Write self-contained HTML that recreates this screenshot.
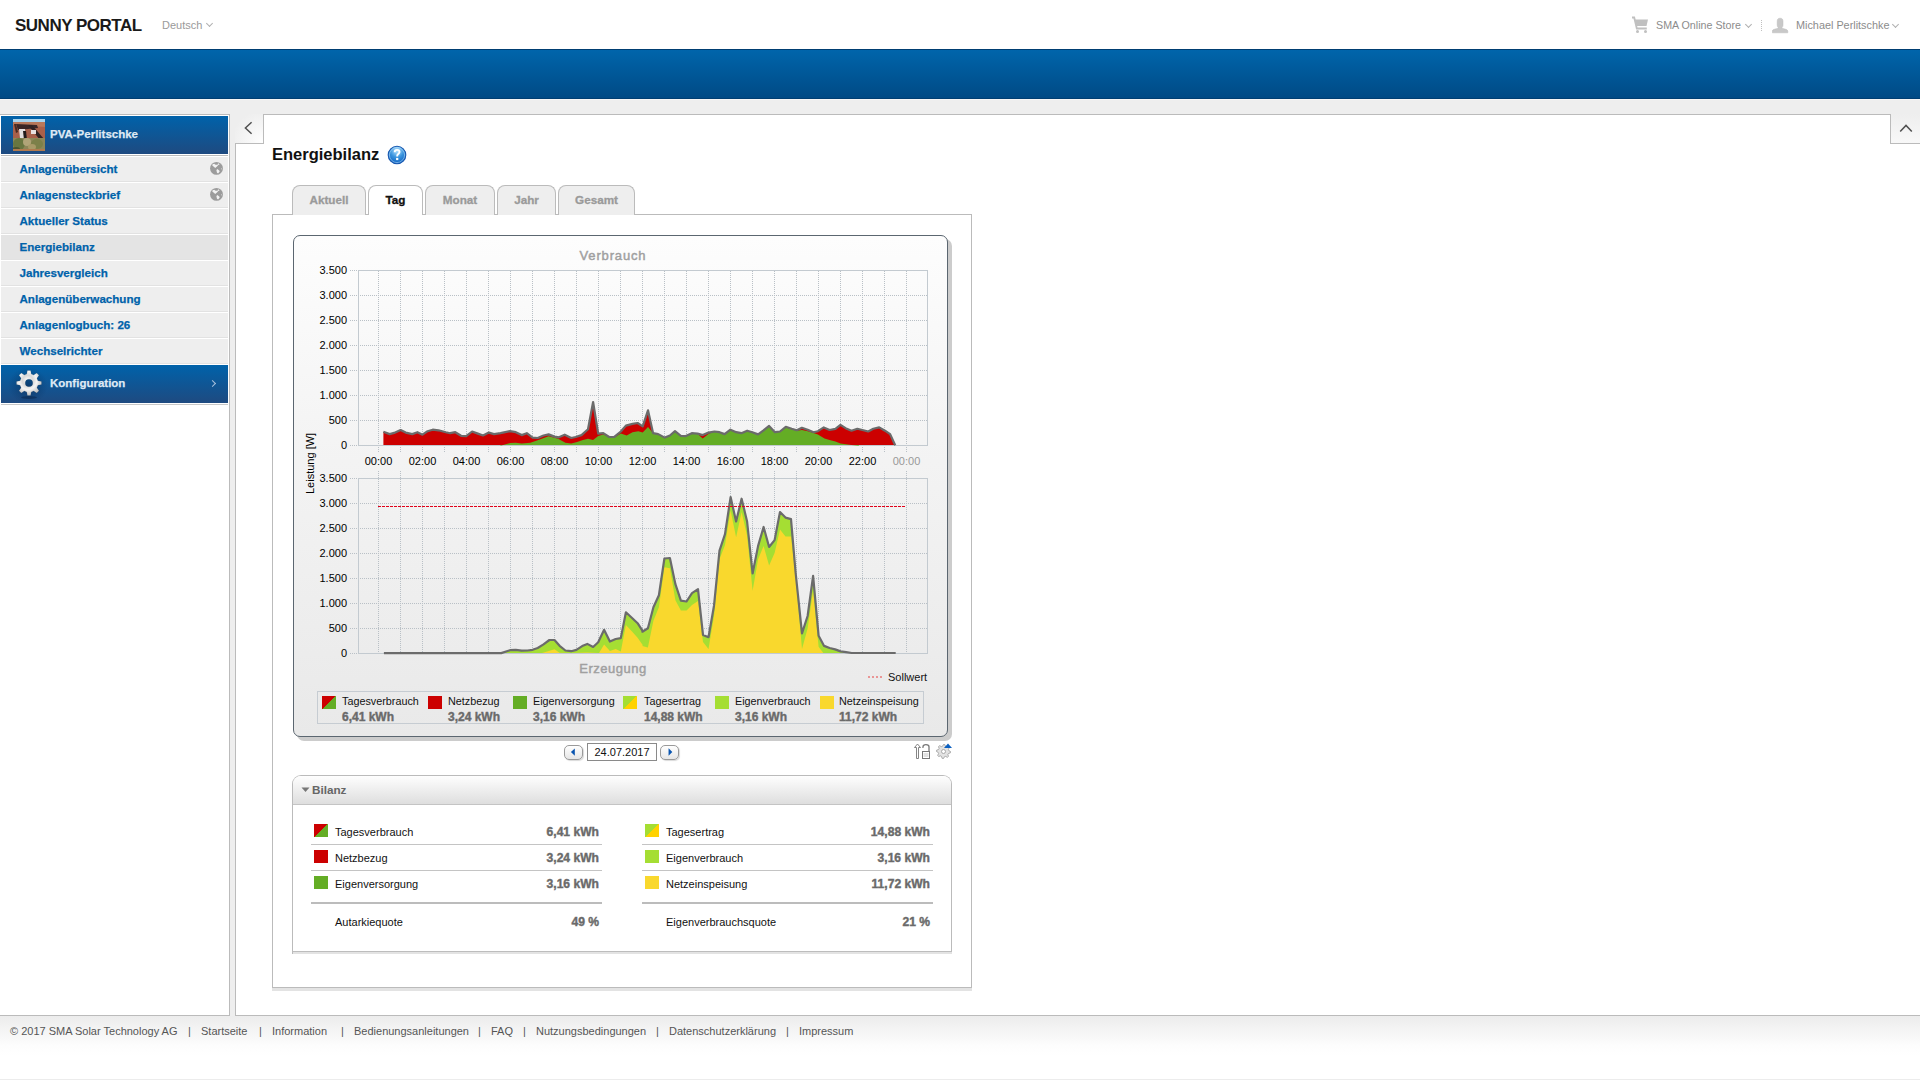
<!DOCTYPE html><html><head><meta charset="utf-8"><style>
*{box-sizing:border-box}
html,body{margin:0;padding:0}
body{width:1920px;height:1080px;overflow:hidden;position:relative;background:#eeeeee;font-family:"Liberation Sans",sans-serif;font-size:11px;color:#000}
div,span,svg{position:absolute}
.nw{white-space:nowrap}
.chev{width:5px;height:5px;border-right:1px solid #b0b0b0;border-bottom:1px solid #b0b0b0;transform:rotate(45deg)}
.mi{left:1px;width:227px;height:24px;background:#eeeeee}
.mt{left:19.5px;color:#0062aa;font-weight:700;font-size:11.6px;line-height:14px;white-space:nowrap;-webkit-text-stroke:0.25px #0062aa}
.tab{top:185px;height:30px;background:#eeeeee;border:1px solid #bbbbbb;border-bottom:none;border-radius:8px 8px 0 0}
.tt{top:7px;left:0;right:0;text-align:center;font-weight:700;font-size:11.7px;line-height:14px;color:#9a9a9a;-webkit-text-stroke:0.3px #9a9a9a}
.yl{width:40px;text-align:right;font-size:11px;line-height:14px;color:#000}
.xl{width:40px;text-align:center;font-size:11px;line-height:14px;color:#000}
.sw{width:14px;height:13px}
.lt{font-size:10.8px;line-height:14px;color:#111;white-space:nowrap}
.lv{font-size:12px;line-height:14px;color:#6a6a6a;font-weight:700;white-space:nowrap;-webkit-text-stroke:0.4px #6a6a6a}
.bt{font-size:11px;line-height:14px;color:#111;white-space:nowrap}
.bv{font-size:12.1px;line-height:14px;color:#6a6a6a;font-weight:700;white-space:nowrap;text-align:right;-webkit-text-stroke:0.4px #6a6a6a}
.hr{height:1px;background:#c4c4c4}
.ft{top:1024px;font-size:11px;line-height:14px;color:#555;white-space:nowrap}
</style></head><body>
<div style="left:0;top:0;width:1920px;height:49px;background:#fff"></div>
<div class="nw" style="left:15px;top:16px;font-size:17px;letter-spacing:-0.5px;font-weight:700;color:#1a1a1a;line-height:20px">SUNNY PORTAL</div>
<div class="nw" style="left:162px;top:18px;font-size:11px;color:#9a9a9a;line-height:14px">Deutsch</div>
<div class="chev" style="left:207px;top:21px"></div>
<svg style="left:1631px;top:16px" width="18" height="18" viewBox="0 0 18 18">
<path d="M1,1.5 H3.2 L5.8,12.5 H15.8" fill="none" stroke="#c0c0c0" stroke-width="1.8"/>
<path d="M4,3.5 H17 L15.5,10 H5.3 Z" fill="#c0c0c0"/>
<circle cx="6.5" cy="15.6" r="1.5" fill="#c0c0c0"/><circle cx="14.5" cy="15.6" r="1.5" fill="#c0c0c0"/></svg>
<div class="nw" style="left:1656px;top:18px;color:#8c8c8c;font-size:10.7px;line-height:14px">SMA Online Store</div>
<div class="chev" style="left:1746px;top:22px"></div>
<div style="left:1761px;top:20px;width:1px;height:11px;border-left:1px dotted #c0c0c0"></div>
<svg style="left:1772px;top:17px" width="17" height="17" viewBox="0 0 17 17">
<path d="M8.1,1.2 C10.2,1.2 11,2.3 11,4.5 V8 C11,9.2 10.6,10 10,10.6 V11.3 C12.5,11.9 15.8,12.5 15.8,14 V15.8 H0.3 V14 C0.3,12.5 3.6,11.9 6.2,11.3 V10.6 C5.6,10 5.2,9.2 5.2,8 V4.5 C5.2,2.3 6,1.2 8.1,1.2Z" fill="#c8c8c8" stroke="#bdbdbd" stroke-width="0.5"/></svg>
<div class="nw" style="left:1796px;top:18px;color:#8c8c8c;font-size:10.85px;line-height:14px">Michael Perlitschke</div>
<div class="chev" style="left:1893px;top:22px"></div>
<div style="left:0;top:49px;width:1920px;height:50px;background:linear-gradient(#0065ab,#004a85);border-top:1px solid #003e72;border-bottom:1px solid #003e72"></div>
<div style="left:0;top:99px;width:1920px;height:1px;background:#f6f6f6"></div>
<div style="left:0;top:114px;width:230px;height:902px;background:#fff;border-top:1px solid #bbb;border-right:1px solid #bbb"></div>
<div style="left:1px;top:116px;width:227px;height:38px;background:linear-gradient(#0062aa,#1e4a80)"></div>
<svg style="left:13px;top:119px" width="32" height="32" viewBox="0 0 32 32"><defs><filter id="bl" x="-10%" y="-10%" width="120%" height="120%"><feGaussianBlur stdDeviation="0.45"/></filter><clipPath id="pc"><rect width="32" height="32"/></clipPath></defs>
<g clip-path="url(#pc)"><rect width="32" height="32" fill="#a8604a"/>
<g filter="url(#bl)">
<rect x="-2" y="-2" width="36" height="5" fill="#a8d4ee"/>
<polygon points="-2,3 34,3 34,8 -2,6" fill="#b8785a"/>
<polygon points="3,5 24,6 25,9 5,11" fill="#3a2828"/>
<polygon points="15,6 19,6 31,20 27,21" fill="#302424"/>
<polygon points="6,10 12,10 13,19 7,19" fill="#e4e0e0"/>
<polygon points="10,12 13,12 14,21 11,21" fill="#241a1a"/>
<rect x="18" y="11" width="5" height="4" fill="#e8e0e0"/>
<polygon points="1,5 3,5 5,13 3,14" fill="#4a2a22"/>
<rect x="-2" y="19" width="36" height="15" fill="#8c8658"/>
<ellipse cx="6" cy="25" rx="6" ry="6" fill="#687640"/><ellipse cx="14" cy="23" rx="4" ry="4" fill="#b0a478"/><ellipse cx="24" cy="25" rx="6" ry="5" fill="#7c8048"/><ellipse cx="19" cy="28" rx="4" ry="3" fill="#a89a68"/><ellipse cx="3" cy="30" rx="4" ry="2" fill="#4a5430"/>
<rect x="-2" y="30" width="36" height="4" fill="#b07a50"/>
</g></g></svg>
<div class="nw" style="left:50px;top:127px;color:#dfe9f4;font-weight:700;font-size:11.5px;line-height:14px;-webkit-text-stroke:0.25px #dfe9f4">PVA-Perlitschke</div>
<div style="left:1px;top:155px;width:227px;height:1px;background:#bbb"></div>
<div class="mi" style="top:157px;background:#eeeeee"></div>
<div style="left:1px;top:181px;width:227px;height:1px;background:#e2e2e2"></div>
<div class="mt" style="top:162px">Anlagenübersicht</div>
<svg style="left:210px;top:162px" width="14" height="14" viewBox="0 0 14 14"><circle cx="6.5" cy="6.4" r="6.4" fill="#9c9c9c"/>
<path d="M2.6,2.2 L4.2,1.8 L5.6,2.7 L7.6,2.7 L8.1,1.3 L9.7,2.3 L8.3,3.1 L7.2,4.2 L5.2,6 L3.8,4.8 L2.3,3.5Z M7.2,7 L9.3,8.6 L9.7,9.5 L8.1,11.5 L7,10.7 L6.4,8.2Z M11.2,6.2 L11.9,6.8 L11.4,7.6 L10.9,7Z" fill="#f2f2f2"/></svg>
<div class="mi" style="top:183px;background:#eeeeee"></div>
<div style="left:1px;top:207px;width:227px;height:1px;background:#e2e2e2"></div>
<div class="mt" style="top:188px">Anlagensteckbrief</div>
<svg style="left:210px;top:188px" width="14" height="14" viewBox="0 0 14 14"><circle cx="6.5" cy="6.4" r="6.4" fill="#9c9c9c"/>
<path d="M2.6,2.2 L4.2,1.8 L5.6,2.7 L7.6,2.7 L8.1,1.3 L9.7,2.3 L8.3,3.1 L7.2,4.2 L5.2,6 L3.8,4.8 L2.3,3.5Z M7.2,7 L9.3,8.6 L9.7,9.5 L8.1,11.5 L7,10.7 L6.4,8.2Z M11.2,6.2 L11.9,6.8 L11.4,7.6 L10.9,7Z" fill="#f2f2f2"/></svg>
<div class="mi" style="top:209px;background:#eeeeee"></div>
<div style="left:1px;top:233px;width:227px;height:1px;background:#e2e2e2"></div>
<div class="mt" style="top:214px">Aktueller Status</div>
<div class="mi" style="top:235px;background:#e4e4e4"></div>
<div style="left:1px;top:259px;width:227px;height:1px;background:#e2e2e2"></div>
<div class="mt" style="top:240px">Energiebilanz</div>
<div class="mi" style="top:261px;background:#eeeeee"></div>
<div style="left:1px;top:285px;width:227px;height:1px;background:#e2e2e2"></div>
<div class="mt" style="top:266px">Jahresvergleich</div>
<div class="mi" style="top:287px;background:#eeeeee"></div>
<div style="left:1px;top:311px;width:227px;height:1px;background:#e2e2e2"></div>
<div class="mt" style="top:292px">Anlagenüberwachung</div>
<div class="mi" style="top:313px;background:#eeeeee"></div>
<div style="left:1px;top:337px;width:227px;height:1px;background:#e2e2e2"></div>
<div class="mt" style="top:318px">Anlagenlogbuch: 26</div>
<div class="mi" style="top:339px;background:#eeeeee"></div>
<div style="left:1px;top:363px;width:227px;height:1px;background:#e2e2e2"></div>
<div class="mt" style="top:344px">Wechselrichter</div>
<div style="left:1px;top:365px;width:227px;height:38px;background:linear-gradient(#0062aa,#1e4a80)"></div>
<div style="left:8px;top:367px;width:40px;height:34px;background:radial-gradient(ellipse at 50% 55%,rgba(0,30,70,0.45),rgba(0,30,70,0) 70%)"></div>
<svg style="left:15px;top:369px" width="28" height="32" viewBox="0 0 28 32"><defs><radialGradient id="gg" cx="45%" cy="40%" r="60%"><stop offset="0" stop-color="#ffffff"/><stop offset="0.35" stop-color="#d8d8d8"/><stop offset="0.6" stop-color="#f4f4f4"/><stop offset="1" stop-color="#bdbdbd"/></radialGradient></defs>
<ellipse cx="14" cy="28.5" rx="8" ry="1.5" fill="rgba(0,20,50,0.35)"/>
<path d="M11.72,5.09 L12.40,1.50 L15.60,1.50 L16.28,5.09 L18.69,6.09 L21.71,4.03 L23.97,6.29 L21.91,9.31 L22.91,11.72 L26.50,12.40 L26.50,15.60 L22.91,16.28 L21.91,18.69 L23.97,21.71 L21.71,23.97 L18.69,21.91 L16.28,22.91 L15.60,26.50 L12.40,26.50 L11.72,22.91 L9.31,21.91 L6.29,23.97 L4.03,21.71 L6.09,18.69 L5.09,16.28 L1.50,15.60 L1.50,12.40 L5.09,11.72 L6.09,9.31 L4.03,6.29 L6.29,4.03 L9.31,6.09Z M14,10.2 A3.8,3.8 0 1,0 14,17.8 A3.8,3.8 0 1,0 14,10.2Z" fill="url(#gg)" fill-rule="evenodd" stroke="rgba(60,60,60,0.35)" stroke-width="0.4" stroke-linejoin="round"/></svg>
<div class="nw" style="left:50px;top:376px;color:#dfe9f4;font-weight:700;font-size:11.5px;line-height:14px;-webkit-text-stroke:0.25px #dfe9f4">Konfiguration</div>
<div style="left:210px;top:381px;width:5px;height:5px;border-right:1.3px solid #a8c0dc;border-top:1.3px solid #a8c0dc;transform:rotate(45deg)"></div>
<div style="left:1px;top:404px;width:227px;height:1px;background:#c8c8c8"></div>
<div style="left:235px;top:114px;width:1685px;height:902px;background:#fff"></div>
<div style="left:263px;top:114px;width:1628px;height:1px;background:#bbb"></div>
<div style="left:235px;top:143px;width:1px;height:873px;background:#bbb"></div>
<div style="left:235px;top:114px;width:29px;height:30px;background:radial-gradient(circle at 100% 100%,#ffffff 0,#f6f6f6 40%,#eeeeee 80%);border-right:1px solid #bbb;border-bottom:1px solid #bbb"></div>
<svg style="left:243px;top:121px" width="10" height="14" viewBox="0 0 10 14"><path d="M8.6,1.2 L2.4,7 L8.6,12.8" fill="none" stroke="#505050" stroke-width="1.5"/></svg>
<div style="left:1890px;top:114px;width:30px;height:30px;background:linear-gradient(#eeeeee,#f8f8f8);border-left:1px solid #bbb;border-bottom:1px solid #bbb"></div>
<svg style="left:1899px;top:123px" width="14" height="10" viewBox="0 0 14 10"><path d="M1.2,8.6 L7,2.4 L12.8,8.6" fill="none" stroke="#505050" stroke-width="1.5"/></svg>
<div class="nw" style="left:272px;top:144px;font-size:16.5px;font-weight:700;color:#111;line-height:20px">Energiebilanz</div>
<svg style="left:386px;top:144px" width="22" height="22" viewBox="0 0 22 22"><defs><radialGradient id="hg" cx="50%" cy="25%" r="75%"><stop offset="0" stop-color="#b8e4ff"/><stop offset="0.5" stop-color="#3a94de"/><stop offset="1" stop-color="#0b5fc0"/></radialGradient></defs>
<circle cx="11" cy="11" r="8.8" fill="url(#hg)" stroke="#1858b0" stroke-width="1.1"/>
<circle cx="11" cy="11" r="7.6" fill="none" stroke="rgba(200,235,255,0.55)" stroke-width="0.9"/>
<path d="M8.7,8.2 C8.7,6.6 9.8,5.9 11.1,5.9 C12.5,5.9 13.5,6.8 13.5,8 C13.5,9.4 12.2,9.8 11.6,10.6 C11.3,11 11.2,11.6 11.2,12.4" fill="none" stroke="#fff" stroke-width="1.9"/>
<rect x="10.1" y="13.9" width="2.2" height="2.2" fill="#fff"/></svg>
<div style="left:272px;top:214px;width:700px;height:774px;background:#fff;border:1px solid #bbb"></div>
<div style="left:272px;top:988px;width:700px;height:3px;background:#e3e3e3"></div>
<div class="tab" style="left:292px;width:74px"><div class="tt">Aktuell</div></div>
<div class="tab" style="left:368px;width:55px;background:#fff;height:30px"><div class="tt" style="color:#111;-webkit-text-stroke:0.3px #111">Tag</div></div>
<div class="tab" style="left:425px;width:70px"><div class="tt">Monat</div></div>
<div class="tab" style="left:497px;width:59px"><div class="tt">Jahr</div></div>
<div class="tab" style="left:558px;width:77px"><div class="tt">Gesamt</div></div>
<div style="left:297px;top:239px;width:655px;height:502px;background:#cccccc;border-radius:7px"></div>
<div style="left:293px;top:235px;width:655px;height:502px;background:linear-gradient(#fdfdfd 0,#f3f3f3 45%,#e9e9e9 100%);border:1px solid #5b6670;border-radius:7px"></div>
<svg style="left:0;top:0" width="1920" height="1080" viewBox="0 0 1920 1080">
<line x1="378.5" y1="271" x2="378.5" y2="453" stroke="#b9c0c6" stroke-width="1" stroke-dasharray="1,1"/>
<line x1="400.5" y1="271" x2="400.5" y2="453" stroke="#b9c0c6" stroke-width="1" stroke-dasharray="1,1"/>
<line x1="422.5" y1="271" x2="422.5" y2="453" stroke="#b9c0c6" stroke-width="1" stroke-dasharray="1,1"/>
<line x1="444.5" y1="271" x2="444.5" y2="453" stroke="#b9c0c6" stroke-width="1" stroke-dasharray="1,1"/>
<line x1="466.5" y1="271" x2="466.5" y2="453" stroke="#b9c0c6" stroke-width="1" stroke-dasharray="1,1"/>
<line x1="488.5" y1="271" x2="488.5" y2="453" stroke="#b9c0c6" stroke-width="1" stroke-dasharray="1,1"/>
<line x1="510.5" y1="271" x2="510.5" y2="453" stroke="#b9c0c6" stroke-width="1" stroke-dasharray="1,1"/>
<line x1="532.5" y1="271" x2="532.5" y2="453" stroke="#b9c0c6" stroke-width="1" stroke-dasharray="1,1"/>
<line x1="554.5" y1="271" x2="554.5" y2="453" stroke="#b9c0c6" stroke-width="1" stroke-dasharray="1,1"/>
<line x1="576.5" y1="271" x2="576.5" y2="453" stroke="#b9c0c6" stroke-width="1" stroke-dasharray="1,1"/>
<line x1="598.5" y1="271" x2="598.5" y2="453" stroke="#b9c0c6" stroke-width="1" stroke-dasharray="1,1"/>
<line x1="620.5" y1="271" x2="620.5" y2="453" stroke="#b9c0c6" stroke-width="1" stroke-dasharray="1,1"/>
<line x1="642.5" y1="271" x2="642.5" y2="453" stroke="#b9c0c6" stroke-width="1" stroke-dasharray="1,1"/>
<line x1="664.5" y1="271" x2="664.5" y2="453" stroke="#b9c0c6" stroke-width="1" stroke-dasharray="1,1"/>
<line x1="686.5" y1="271" x2="686.5" y2="453" stroke="#b9c0c6" stroke-width="1" stroke-dasharray="1,1"/>
<line x1="708.5" y1="271" x2="708.5" y2="453" stroke="#b9c0c6" stroke-width="1" stroke-dasharray="1,1"/>
<line x1="730.5" y1="271" x2="730.5" y2="453" stroke="#b9c0c6" stroke-width="1" stroke-dasharray="1,1"/>
<line x1="752.5" y1="271" x2="752.5" y2="453" stroke="#b9c0c6" stroke-width="1" stroke-dasharray="1,1"/>
<line x1="774.5" y1="271" x2="774.5" y2="453" stroke="#b9c0c6" stroke-width="1" stroke-dasharray="1,1"/>
<line x1="796.5" y1="271" x2="796.5" y2="453" stroke="#b9c0c6" stroke-width="1" stroke-dasharray="1,1"/>
<line x1="818.5" y1="271" x2="818.5" y2="453" stroke="#b9c0c6" stroke-width="1" stroke-dasharray="1,1"/>
<line x1="840.5" y1="271" x2="840.5" y2="453" stroke="#b9c0c6" stroke-width="1" stroke-dasharray="1,1"/>
<line x1="862.5" y1="271" x2="862.5" y2="453" stroke="#b9c0c6" stroke-width="1" stroke-dasharray="1,1"/>
<line x1="884.5" y1="271" x2="884.5" y2="453" stroke="#b9c0c6" stroke-width="1" stroke-dasharray="1,1"/>
<line x1="906.5" y1="271" x2="906.5" y2="453" stroke="#b9c0c6" stroke-width="1" stroke-dasharray="1,1"/>
<line x1="350" y1="270.5" x2="927" y2="270.5" stroke="#b9c0c6" stroke-width="1" stroke-dasharray="1,1"/>
<line x1="350" y1="295.5" x2="927" y2="295.5" stroke="#b9c0c6" stroke-width="1" stroke-dasharray="1,1"/>
<line x1="350" y1="320.5" x2="927" y2="320.5" stroke="#b9c0c6" stroke-width="1" stroke-dasharray="1,1"/>
<line x1="350" y1="345.5" x2="927" y2="345.5" stroke="#b9c0c6" stroke-width="1" stroke-dasharray="1,1"/>
<line x1="350" y1="370.5" x2="927" y2="370.5" stroke="#b9c0c6" stroke-width="1" stroke-dasharray="1,1"/>
<line x1="350" y1="395.5" x2="927" y2="395.5" stroke="#b9c0c6" stroke-width="1" stroke-dasharray="1,1"/>
<line x1="350" y1="420.5" x2="927" y2="420.5" stroke="#b9c0c6" stroke-width="1" stroke-dasharray="1,1"/>
<line x1="350" y1="445.5" x2="927" y2="445.5" stroke="#b9c0c6" stroke-width="1" stroke-dasharray="1,1"/>
<rect x="358.5" y="270.5" width="569" height="175" fill="none" stroke="#c3cad0" stroke-width="1"/>
<line x1="378.5" y1="471" x2="378.5" y2="653" stroke="#b9c0c6" stroke-width="1" stroke-dasharray="1,1"/>
<line x1="400.5" y1="471" x2="400.5" y2="653" stroke="#b9c0c6" stroke-width="1" stroke-dasharray="1,1"/>
<line x1="422.5" y1="471" x2="422.5" y2="653" stroke="#b9c0c6" stroke-width="1" stroke-dasharray="1,1"/>
<line x1="444.5" y1="471" x2="444.5" y2="653" stroke="#b9c0c6" stroke-width="1" stroke-dasharray="1,1"/>
<line x1="466.5" y1="471" x2="466.5" y2="653" stroke="#b9c0c6" stroke-width="1" stroke-dasharray="1,1"/>
<line x1="488.5" y1="471" x2="488.5" y2="653" stroke="#b9c0c6" stroke-width="1" stroke-dasharray="1,1"/>
<line x1="510.5" y1="471" x2="510.5" y2="653" stroke="#b9c0c6" stroke-width="1" stroke-dasharray="1,1"/>
<line x1="532.5" y1="471" x2="532.5" y2="653" stroke="#b9c0c6" stroke-width="1" stroke-dasharray="1,1"/>
<line x1="554.5" y1="471" x2="554.5" y2="653" stroke="#b9c0c6" stroke-width="1" stroke-dasharray="1,1"/>
<line x1="576.5" y1="471" x2="576.5" y2="653" stroke="#b9c0c6" stroke-width="1" stroke-dasharray="1,1"/>
<line x1="598.5" y1="471" x2="598.5" y2="653" stroke="#b9c0c6" stroke-width="1" stroke-dasharray="1,1"/>
<line x1="620.5" y1="471" x2="620.5" y2="653" stroke="#b9c0c6" stroke-width="1" stroke-dasharray="1,1"/>
<line x1="642.5" y1="471" x2="642.5" y2="653" stroke="#b9c0c6" stroke-width="1" stroke-dasharray="1,1"/>
<line x1="664.5" y1="471" x2="664.5" y2="653" stroke="#b9c0c6" stroke-width="1" stroke-dasharray="1,1"/>
<line x1="686.5" y1="471" x2="686.5" y2="653" stroke="#b9c0c6" stroke-width="1" stroke-dasharray="1,1"/>
<line x1="708.5" y1="471" x2="708.5" y2="653" stroke="#b9c0c6" stroke-width="1" stroke-dasharray="1,1"/>
<line x1="730.5" y1="471" x2="730.5" y2="653" stroke="#b9c0c6" stroke-width="1" stroke-dasharray="1,1"/>
<line x1="752.5" y1="471" x2="752.5" y2="653" stroke="#b9c0c6" stroke-width="1" stroke-dasharray="1,1"/>
<line x1="774.5" y1="471" x2="774.5" y2="653" stroke="#b9c0c6" stroke-width="1" stroke-dasharray="1,1"/>
<line x1="796.5" y1="471" x2="796.5" y2="653" stroke="#b9c0c6" stroke-width="1" stroke-dasharray="1,1"/>
<line x1="818.5" y1="471" x2="818.5" y2="653" stroke="#b9c0c6" stroke-width="1" stroke-dasharray="1,1"/>
<line x1="840.5" y1="471" x2="840.5" y2="653" stroke="#b9c0c6" stroke-width="1" stroke-dasharray="1,1"/>
<line x1="862.5" y1="471" x2="862.5" y2="653" stroke="#b9c0c6" stroke-width="1" stroke-dasharray="1,1"/>
<line x1="884.5" y1="471" x2="884.5" y2="653" stroke="#b9c0c6" stroke-width="1" stroke-dasharray="1,1"/>
<line x1="906.5" y1="471" x2="906.5" y2="653" stroke="#b9c0c6" stroke-width="1" stroke-dasharray="1,1"/>
<line x1="350" y1="478.5" x2="927" y2="478.5" stroke="#b9c0c6" stroke-width="1" stroke-dasharray="1,1"/>
<line x1="350" y1="503.5" x2="927" y2="503.5" stroke="#b9c0c6" stroke-width="1" stroke-dasharray="1,1"/>
<line x1="350" y1="528.5" x2="927" y2="528.5" stroke="#b9c0c6" stroke-width="1" stroke-dasharray="1,1"/>
<line x1="350" y1="553.5" x2="927" y2="553.5" stroke="#b9c0c6" stroke-width="1" stroke-dasharray="1,1"/>
<line x1="350" y1="578.5" x2="927" y2="578.5" stroke="#b9c0c6" stroke-width="1" stroke-dasharray="1,1"/>
<line x1="350" y1="603.5" x2="927" y2="603.5" stroke="#b9c0c6" stroke-width="1" stroke-dasharray="1,1"/>
<line x1="350" y1="628.5" x2="927" y2="628.5" stroke="#b9c0c6" stroke-width="1" stroke-dasharray="1,1"/>
<line x1="350" y1="653.5" x2="927" y2="653.5" stroke="#b9c0c6" stroke-width="1" stroke-dasharray="1,1"/>
<rect x="358.5" y="478.5" width="569" height="175" fill="none" stroke="#c3cad0" stroke-width="1"/>
<path d="M383.4,445.0 L383.4,431.8 L389.7,434.1 L394.1,432.9 L400.6,430.0 L405.7,432.6 L412.3,434.1 L417.4,432.2 L422.5,434.7 L427.6,431.2 L432.7,429.7 L438.5,430.3 L445.8,432.2 L450.2,433.2 L455.3,432.2 L461.1,435.8 L466.2,436.1 L472.1,431.5 L477.9,433.6 L483.0,435.5 L488.9,432.6 L494.0,434.1 L500.5,433.2 L510.0,431.2 L515.8,432.2 L521.7,435.1 L526.8,433.2 L532.6,437.6 L537.7,438.0 L543.5,435.5 L548.6,434.4 L554.5,436.6 L558.9,437.3 L564.7,434.7 L571.2,438.0 L575.6,437.0 L581.5,435.1 L588.0,429.3 L593.1,402.0 L598.2,433.6 L603.3,433.2 L609.2,437.0 L614.3,436.9 L620.8,431.5 L625.9,425.6 L632.5,423.9 L637.6,423.0 L642.7,426.4 L648.0,410.3 L653.1,433.2 L658.2,434.1 L664.8,437.6 L669.9,435.5 L675.0,431.2 L680.8,435.8 L685.9,436.1 L691.8,433.2 L697.6,433.6 L702.7,435.1 L708.5,432.6 L714.4,431.5 L719.5,432.2 L724.6,434.1 L730.4,429.7 L736.2,432.2 L741.4,433.2 L747.2,430.7 L752.3,432.2 L758.1,434.4 L763.2,430.7 L769.1,425.9 L774.9,432.2 L780.0,431.5 L785.8,426.8 L791.7,428.8 L796.8,430.3 L801.9,427.8 L807.7,429.7 L813.5,432.2 L817.9,431.2 L823.8,427.4 L829.6,430.0 L835.4,428.8 L840.5,424.9 L845.6,428.2 L851.5,430.7 L857.3,428.8 L862.4,430.0 L868.2,431.5 L873.3,428.8 L879.2,427.4 L885.0,430.7 L890.1,434.1 L895.2,445.3 L895.2,445.0Z" fill="#cc0000"/>
<path d="M500.5,445.0 L500.5,445.8 L510.0,443.1 L515.8,442.8 L521.7,443.6 L530.4,442.8 L537.7,440.2 L548.6,436.3 L558.1,438.8 L565.4,442.8 L571.2,443.6 L577.1,442.0 L582.9,439.9 L588.0,438.8 L593.1,439.9 L598.2,436.1 L603.3,434.4 L609.2,437.3 L615.0,437.3 L620.8,433.6 L626.7,435.5 L632.5,432.2 L638.3,431.2 L642.7,432.6 L648.0,427.1 L653.1,433.2 L658.2,434.1 L664.8,437.6 L669.9,435.5 L675.0,431.2 L680.8,435.8 L685.9,436.1 L691.8,433.2 L697.6,434.1 L702.7,438.5 L708.5,434.1 L714.4,431.5 L719.5,432.2 L724.6,434.1 L730.4,429.7 L736.2,432.2 L741.4,433.2 L747.2,430.7 L752.3,432.2 L758.1,434.4 L763.2,430.7 L769.1,425.9 L774.9,432.2 L780.0,431.5 L785.8,427.4 L791.7,429.3 L796.8,430.7 L801.9,430.0 L807.7,431.2 L813.5,432.9 L817.9,434.4 L824.5,438.5 L829.6,439.9 L835.4,441.4 L840.5,443.4 L851.5,444.9 L858.8,445.8 L858.8,445.0Z" fill="#64ad25"/>
<path d="M383.4,431.8 L389.7,434.1 L394.1,432.9 L400.6,430.0 L405.7,432.6 L412.3,434.1 L417.4,432.2 L422.5,434.7 L427.6,431.2 L432.7,429.7 L438.5,430.3 L445.8,432.2 L450.2,433.2 L455.3,432.2 L461.1,435.8 L466.2,436.1 L472.1,431.5 L477.9,433.6 L483.0,435.5 L488.9,432.6 L494.0,434.1 L500.5,433.2 L510.0,431.2 L515.8,432.2 L521.7,435.1 L526.8,433.2 L532.6,437.6 L537.7,438.0 L543.5,435.5 L548.6,434.4 L554.5,436.6 L558.9,437.3 L564.7,434.7 L571.2,438.0 L575.6,437.0 L581.5,435.1 L588.0,429.3 L593.1,402.0 L598.2,433.6 L603.3,433.2 L609.2,437.0 L614.3,436.9 L620.8,431.5 L625.9,425.6 L632.5,423.9 L637.6,423.0 L642.7,426.4 L648.0,410.3 L653.1,433.2 L658.2,434.1 L664.8,437.6 L669.9,435.5 L675.0,431.2 L680.8,435.8 L685.9,436.1 L691.8,433.2 L697.6,433.6 L702.7,435.1 L708.5,432.6 L714.4,431.5 L719.5,432.2 L724.6,434.1 L730.4,429.7 L736.2,432.2 L741.4,433.2 L747.2,430.7 L752.3,432.2 L758.1,434.4 L763.2,430.7 L769.1,425.9 L774.9,432.2 L780.0,431.5 L785.8,426.8 L791.7,428.8 L796.8,430.3 L801.9,427.8 L807.7,429.7 L813.5,432.2 L817.9,431.2 L823.8,427.4 L829.6,430.0 L835.4,428.8 L840.5,424.9 L845.6,428.2 L851.5,430.7 L857.3,428.8 L862.4,430.0 L868.2,431.5 L873.3,428.8 L879.2,427.4 L885.0,430.7 L890.1,434.1 L895.2,445.3" fill="none" stroke="#6b6b6b" stroke-width="2.2" stroke-linejoin="round"/>
<path d="M383.9,653.0 L383.9,653.1 L501.2,653.1 L510.0,650.2 L515.8,649.8 L521.7,650.6 L527.5,650.5 L532.6,649.8 L537.7,648.0 L543.5,644.4 L549.4,640.0 L554.5,640.0 L559.6,645.8 L565.4,650.5 L571.2,651.2 L576.4,649.9 L582.2,646.1 L587.3,643.9 L593.1,647.0 L598.2,642.2 L604.1,629.8 L609.9,641.5 L615.7,639.0 L620.8,638.1 L625.9,612.3 L631.8,617.8 L637.6,623.2 L642.7,631.2 L642.4,631.7 L647.9,628.3 L653.4,607.3 L658.9,595.2 L664.4,558.5 L669.9,558.0 L675.4,584.2 L680.9,600.7 L686.5,601.5 L692.0,593.1 L698.0,589.2 L703.0,634.9 L708.5,637.2 L714.0,605.7 L719.5,550.6 L725.0,534.1 L730.6,497.1 L736.1,521.5 L741.6,498.7 L747.1,521.5 L752.6,573.5 L758.1,545.9 L763.6,527.0 L769.1,547.0 L774.6,540.1 L780.0,512.0 L785.5,517.6 L791.0,519.1 L795.7,573.5 L802.0,633.3 L807.6,616.0 L813.1,575.8 L818.6,635.7 L824.1,645.9 L829.6,648.0 L835.1,649.4 L840.6,651.4 L846.1,652.2 L851.7,653.0 L895.7,653.0 L895.7,653.0Z" fill="#a5de33"/>
<path d="M542.1,653.0 L542.1,653.1 L554.5,649.2 L559.6,652.8 L571.2,653.1 L587.3,652.4 L599.0,653.1 L604.1,644.4 L609.9,650.9 L615.7,649.0 L620.8,651.4 L625.9,625.1 L631.8,631.2 L637.6,637.8 L642.7,645.1 L642.4,645.9 L647.9,647.5 L653.4,620.7 L658.9,607.3 L664.4,567.2 L669.9,568.3 L675.4,600.2 L680.9,610.5 L686.5,610.5 L692.0,605.0 L698.0,601.0 L703.0,642.0 L708.5,649.1 L714.0,616.0 L719.5,559.3 L725.0,545.1 L730.6,510.5 L736.1,537.2 L741.6,512.0 L747.1,535.7 L752.6,590.8 L758.1,559.3 L763.6,545.9 L769.1,565.6 L774.6,553.0 L780.0,529.4 L785.5,536.5 L791.0,536.5 L795.7,578.2 L802.0,649.1 L807.6,628.6 L813.1,590.8 L818.6,646.7 L823.3,653.0 L823.3,653.0Z" fill="#f9d82d"/>
<path d="M383.9,653.1 L501.2,653.1 L510.0,650.2 L515.8,649.8 L521.7,650.6 L527.5,650.5 L532.6,649.8 L537.7,648.0 L543.5,644.4 L549.4,640.0 L554.5,640.0 L559.6,645.8 L565.4,650.5 L571.2,651.2 L576.4,649.9 L582.2,646.1 L587.3,643.9 L593.1,647.0 L598.2,642.2 L604.1,629.8 L609.9,641.5 L615.7,639.0 L620.8,638.1 L625.9,612.3 L631.8,617.8 L637.6,623.2 L642.7,631.2 L642.4,631.7 L647.9,628.3 L653.4,607.3 L658.9,595.2 L664.4,558.5 L669.9,558.0 L675.4,584.2 L680.9,600.7 L686.5,601.5 L692.0,593.1 L698.0,589.2 L703.0,634.9 L708.5,637.2 L714.0,605.7 L719.5,550.6 L725.0,534.1 L730.6,497.1 L736.1,521.5 L741.6,498.7 L747.1,521.5 L752.6,573.5 L758.1,545.9 L763.6,527.0 L769.1,547.0 L774.6,540.1 L780.0,512.0 L785.5,517.6 L791.0,519.1 L795.7,573.5 L802.0,633.3 L807.6,616.0 L813.1,575.8 L818.6,635.7 L824.1,645.9 L829.6,648.0 L835.1,649.4 L840.6,651.4 L846.1,652.2 L851.7,653.0 L895.7,653.0" fill="none" stroke="#6b6b6b" stroke-width="2.2" stroke-linejoin="round"/>
<line x1="378" y1="506.5" x2="906" y2="506.5" stroke="#e00018" stroke-width="1" stroke-dasharray="3,1"/>
<line x1="868" y1="677" x2="884" y2="677" stroke="#e84040" stroke-width="1.2" stroke-dasharray="2,2"/>
</svg>
<div class="yl" style="left:307px;top:263px">3.500</div>
<div class="yl" style="left:307px;top:288px">3.000</div>
<div class="yl" style="left:307px;top:313px">2.500</div>
<div class="yl" style="left:307px;top:338px">2.000</div>
<div class="yl" style="left:307px;top:363px">1.500</div>
<div class="yl" style="left:307px;top:388px">1.000</div>
<div class="yl" style="left:307px;top:413px">500</div>
<div class="yl" style="left:307px;top:438px">0</div>
<div class="yl" style="left:307px;top:471px">3.500</div>
<div class="yl" style="left:307px;top:496px">3.000</div>
<div class="yl" style="left:307px;top:521px">2.500</div>
<div class="yl" style="left:307px;top:546px">2.000</div>
<div class="yl" style="left:307px;top:571px">1.500</div>
<div class="yl" style="left:307px;top:596px">1.000</div>
<div class="yl" style="left:307px;top:621px">500</div>
<div class="yl" style="left:307px;top:646px">0</div>
<div class="xl" style="left:358.5px;top:454px;color:#000">00:00</div>
<div class="xl" style="left:402.5px;top:454px;color:#000">02:00</div>
<div class="xl" style="left:446.5px;top:454px;color:#000">04:00</div>
<div class="xl" style="left:490.5px;top:454px;color:#000">06:00</div>
<div class="xl" style="left:534.5px;top:454px;color:#000">08:00</div>
<div class="xl" style="left:578.5px;top:454px;color:#000">10:00</div>
<div class="xl" style="left:622.5px;top:454px;color:#000">12:00</div>
<div class="xl" style="left:666.5px;top:454px;color:#000">14:00</div>
<div class="xl" style="left:710.5px;top:454px;color:#000">16:00</div>
<div class="xl" style="left:754.5px;top:454px;color:#000">18:00</div>
<div class="xl" style="left:798.5px;top:454px;color:#000">20:00</div>
<div class="xl" style="left:842.5px;top:454px;color:#000">22:00</div>
<div class="xl" style="left:886.5px;top:454px;color:#999">00:00</div>
<div class="nw" style="left:280px;top:457px;width:60px;text-align:center;font-size:11px;line-height:14px;transform:rotate(-90deg);transform-origin:50% 50%">Leistung [W]</div>
<div class="nw" style="left:563px;top:248px;width:100px;text-align:center;font-size:13px;font-weight:400;letter-spacing:0.85px;line-height:16px;color:#a0a0a0;-webkit-text-stroke:0.45px #a0a0a0">Verbrauch</div>
<div class="nw" style="left:563px;top:660.5px;width:100px;text-align:center;font-size:13px;font-weight:400;letter-spacing:0.5px;line-height:16px;color:#a0a0a0;-webkit-text-stroke:0.45px #a0a0a0">Erzeugung</div>
<div class="nw" style="left:888px;top:670px;font-size:11px;line-height:14px;color:#111">Sollwert</div>
<div style="left:317px;top:691px;width:607px;height:33px;border:1px solid #c6ccd2"></div>
<div class="sw" style="left:322px;top:696px;background:linear-gradient(to bottom right,#cc0000 50%,#64ad25 50%)"></div>
<div class="lt" style="left:342px;top:694px">Tagesverbrauch</div>
<div class="lv" style="left:342px;top:710px">6,41 kWh</div>
<div class="sw" style="left:428px;top:696px;background:#cc0000"></div>
<div class="lt" style="left:448px;top:694px">Netzbezug</div>
<div class="lv" style="left:448px;top:710px">3,24 kWh</div>
<div class="sw" style="left:513px;top:696px;background:#64ad25"></div>
<div class="lt" style="left:533px;top:694px">Eigenversorgung</div>
<div class="lv" style="left:533px;top:710px">3,16 kWh</div>
<div class="sw" style="left:623px;top:696px;background:linear-gradient(to bottom right,#a5de33 50%,#ffd200 50%)"></div>
<div class="lt" style="left:644px;top:694px">Tagesertrag</div>
<div class="lv" style="left:644px;top:710px">14,88 kWh</div>
<div class="sw" style="left:715px;top:696px;background:#a5de33"></div>
<div class="lt" style="left:735px;top:694px">Eigenverbrauch</div>
<div class="lv" style="left:735px;top:710px">3,16 kWh</div>
<div class="sw" style="left:820px;top:696px;background:#f9d82d"></div>
<div class="lt" style="left:839px;top:694px">Netzeinspeisung</div>
<div class="lv" style="left:839px;top:710px">11,72 kWh</div>
<div style="left:564px;top:745px;width:19px;height:15px;border:1px solid #9a9a9a;border-radius:5px;background:linear-gradient(#ffffff,#e6e6e6);box-shadow:1px 1px 1px rgba(0,0,0,0.15)"><svg style="left:0;top:0" width="17" height="13" viewBox="1 1 16 14"><path d="M10.4,3.6 L6.2,7.5 L10.4,11.4Z" fill="#0a55b0"/></svg></div>
<div style="left:587px;top:743px;width:70px;height:18px;border:1px solid #8a8a8a;background:#fff"></div>
<div class="nw" style="left:587px;top:745px;width:70px;text-align:center;font-size:11px;line-height:14px;color:#111">24.07.2017</div>
<div style="left:660px;top:745px;width:19px;height:15px;border:1px solid #9a9a9a;border-radius:5px;background:linear-gradient(#ffffff,#e6e6e6);box-shadow:1px 1px 1px rgba(0,0,0,0.15)"><svg style="left:0;top:0" width="17" height="13" viewBox="1 1 16 14"><path d="M8,3.5 L12,7.5 L8,11.5Z" fill="#0a55b0"/></svg></div>
<svg style="left:913px;top:743px" width="18" height="17" viewBox="0 0 18 17">
<path d="M4.5,1 L1.5,4.5 H3.5 V15.5 H5.5 V4.5 H7.5 Z" fill="#fff" stroke="#777" stroke-width="0.9"/>
<path d="M10,5 V3.8 C10,2.2 11,1.6 13,1.6 C15,1.6 16,2.2 16,3.8 V8.5" fill="none" stroke="#777" stroke-width="1.3"/>
<path d="M11.2,6.5 V4.6 C11.2,3.4 12,3 12.6,3" fill="none" stroke="#fff" stroke-width="0.6"/>
<rect x="9.5" y="8.5" width="7" height="7" fill="#fff" stroke="#777" stroke-width="1"/>
<line x1="10.5" y1="11" x2="15.5" y2="11" stroke="#aaa" stroke-width="0.7"/><line x1="10.5" y1="13" x2="15.5" y2="13" stroke="#aaa" stroke-width="0.7"/></svg>
<svg style="left:935px;top:743px" width="18" height="17" viewBox="0 0 18 17">
<path d="M15.00,8.00 L14.87,9.37 L12.90,10.03 L12.41,10.94 L12.95,12.95 L11.89,13.82 L10.03,12.90 L9.03,13.20 L8.00,15.00 L6.63,14.87 L5.97,12.90 L5.06,12.41 L3.05,12.95 L2.18,11.89 L3.10,10.03 L2.80,9.03 L1.00,8.00 L1.13,6.63 L3.10,5.97 L3.59,5.06 L3.05,3.05 L4.11,2.18 L5.97,3.10 L6.97,2.80 L8.00,1.00 L9.37,1.13 L10.03,3.10 L10.94,3.59 L12.95,3.05 L13.82,4.11 L12.90,5.97 L13.20,6.97Z M8,6 A2,2 0 1,0 8,10 A2,2 0 1,0 8,6Z" fill="#e2e2e2" stroke="#9a9a9a" stroke-width="0.8" fill-rule="evenodd" transform="translate(0.5,0.5)"/>
<path d="M13,0.5 L17,5 H9Z" fill="#0a5fc0"/></svg>
<div style="left:292px;top:775px;width:660px;height:177px;background:#fff;border:1px solid #bbb;border-bottom:none;border-radius:9px 9px 0 0"></div>
<div style="left:293px;top:776px;width:658px;height:28px;background:linear-gradient(#fefefe,#dedede);border-radius:8px 8px 0 0"></div>
<div style="left:293px;top:804px;width:658px;height:1px;background:#c4c4c4"></div>
<div style="left:292px;top:951px;width:660px;height:3px;background:#e3e3e3;border-top:1px solid #bdbdbd;border-left:1px solid #bbb"></div>
<svg style="left:301px;top:787px" width="9" height="6" viewBox="0 0 9 6"><path d="M0.5,0.5 H8.5 L4.5,5Z" fill="#777"/></svg>
<div class="nw" style="left:312px;top:783px;font-size:11.7px;font-weight:700;color:#666;line-height:14px">Bilanz</div>
<div class="sw" style="left:314px;top:824px;background:linear-gradient(to bottom right,#cc0000 50%,#64ad25 50%)"></div>
<div class="bt" style="left:335px;top:825px">Tagesverbrauch</div>
<div class="bv" style="left:479px;width:120px;top:825px">6,41 kWh</div>
<div class="hr" style="left:311px;width:291px;top:844px"></div>
<div class="sw" style="left:314px;top:850px;background:#cc0000"></div>
<div class="bt" style="left:335px;top:851px">Netzbezug</div>
<div class="bv" style="left:479px;width:120px;top:851px">3,24 kWh</div>
<div class="hr" style="left:311px;width:291px;top:870px"></div>
<div class="sw" style="left:314px;top:876px;background:#64ad25"></div>
<div class="bt" style="left:335px;top:877px">Eigenversorgung</div>
<div class="bv" style="left:479px;width:120px;top:877px">3,16 kWh</div>
<div style="left:311px;width:291px;top:902px;height:2px;background:#bcbcbc"></div>
<div class="bt" style="left:335px;top:915px">Autarkiequote</div>
<div class="bv" style="left:479px;width:120px;top:915px">49 %</div>
<div class="sw" style="left:645px;top:824px;background:linear-gradient(to bottom right,#a5de33 50%,#ffd200 50%)"></div>
<div class="bt" style="left:666px;top:825px">Tagesertrag</div>
<div class="bv" style="left:810px;width:120px;top:825px">14,88 kWh</div>
<div class="hr" style="left:642px;width:291px;top:844px"></div>
<div class="sw" style="left:645px;top:850px;background:#a5de33"></div>
<div class="bt" style="left:666px;top:851px">Eigenverbrauch</div>
<div class="bv" style="left:810px;width:120px;top:851px">3,16 kWh</div>
<div class="hr" style="left:642px;width:291px;top:870px"></div>
<div class="sw" style="left:645px;top:876px;background:#f9d82d"></div>
<div class="bt" style="left:666px;top:877px">Netzeinspeisung</div>
<div class="bv" style="left:810px;width:120px;top:877px">11,72 kWh</div>
<div style="left:642px;width:291px;top:902px;height:2px;background:#bcbcbc"></div>
<div class="bt" style="left:666px;top:915px">Eigenverbrauchsquote</div>
<div class="bv" style="left:810px;width:120px;top:915px">21 %</div>
<div style="left:0;top:1015px;width:1920px;height:65px;background:linear-gradient(#ececec 0,#f3f3f3 12px,#fdfdfd 30px,#ffffff 40px);border-top:1px solid #bbb"></div>
<div style="left:0;top:1079px;width:1920px;height:1px;background:#ececec"></div>
<div style="left:230px;top:1015px;width:5px;height:1px;background:#eeeeee"></div>
<div class="ft" style="left:10px">© 2017 SMA Solar Technology AG</div>
<div class="ft" style="left:201px">Startseite</div>
<div class="ft" style="left:272px">Information</div>
<div class="ft" style="left:354px">Bedienungsanleitungen</div>
<div class="ft" style="left:491px">FAQ</div>
<div class="ft" style="left:536px">Nutzungsbedingungen</div>
<div class="ft" style="left:669px">Datenschutzerklärung</div>
<div class="ft" style="left:799px">Impressum</div>
<div class="ft" style="left:188px">|</div>
<div class="ft" style="left:259px">|</div>
<div class="ft" style="left:341px">|</div>
<div class="ft" style="left:478px">|</div>
<div class="ft" style="left:523px">|</div>
<div class="ft" style="left:656px">|</div>
<div class="ft" style="left:786px">|</div>
</body></html>
